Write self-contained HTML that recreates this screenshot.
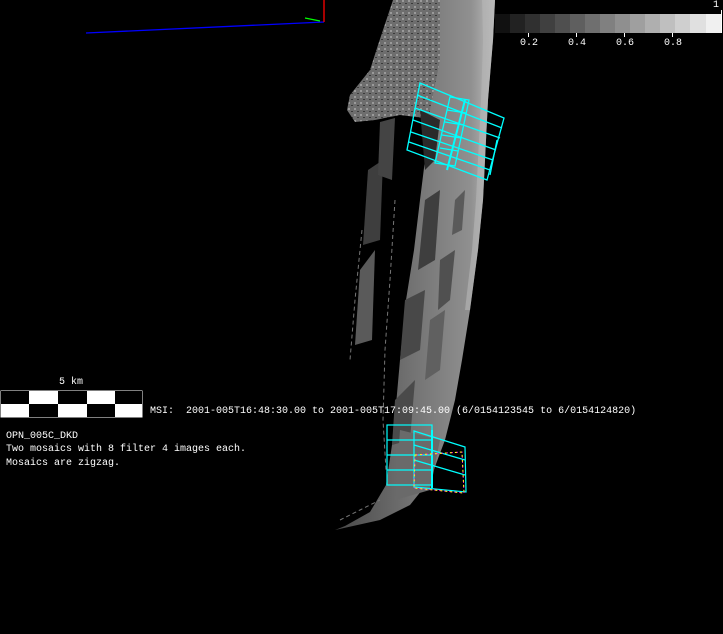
<!DOCTYPE html>
<html><head><style>
html,body{margin:0;padding:0;background:#000;width:723px;height:634px;overflow:hidden}
.t{position:absolute;color:#fff;font-family:"Liberation Mono",monospace;font-size:10px;white-space:pre;line-height:12px}
</style></head><body>
<svg width="723" height="634" style="position:absolute;left:0;top:0">
<defs>
<linearGradient id="g" x1="0" y1="0" x2="1" y2="0">
<stop offset="0" stop-color="#484848"/><stop offset="0.5" stop-color="#747474"/><stop offset="0.85" stop-color="#909090"/><stop offset="1" stop-color="#bdbdbd"/>
</linearGradient>
<pattern id="dots" width="6" height="6" patternUnits="userSpaceOnUse">
<rect width="6" height="6" fill="#6e6e6e"/>
<rect x="0" y="0" width="2" height="2" fill="#9a9a9a"/>
<rect x="3" y="3" width="2" height="1" fill="#3a3a3a"/>
</pattern>
</defs>
<line x1="86" y1="33" x2="324" y2="22" stroke="#0000ff" stroke-width="1.3"/>
<line x1="324" y1="0" x2="324" y2="22" stroke="#ff0000" stroke-width="1.3"/>
<line x1="305" y1="18" x2="320" y2="21" stroke="#00ff00" stroke-width="1.3"/>
<polygon points="393,0 480,0 478,60 460,100 440,120 400,115 375,120 355,122 347,110 350,95 370,70 378,45" fill="url(#dots)"/>
<polygon points="440,0 495,0 493,40 488,100 485,160 483,200 478,250 470,310 462,360 455,400 445,440 430,480 410,505 380,520 335,530 345,526 370,512 386,485 392,445 396,405 400,360 406,300 414,250 420,200 425,160 430,110 440,60" fill="url(#g)"/>
<polygon points="482,0 495,0 493,40 488,100 485,160 483,200 478,250 470,310 465,310 472,250 476,200 478,160 481,100 483,40" fill="#b8b8b8" opacity="0.6"/>
<polygon points="420,110 440,120 435,160 425,170" fill="#2a2a2a"/>
<polygon points="425,200 440,190 435,260 418,270" fill="#3e3e3e"/>
<polygon points="440,260 455,250 450,300 438,310" fill="#505050"/>
<polygon points="405,300 425,290 420,350 400,360" fill="#484848"/>
<polygon points="395,400 415,380 410,440 392,445" fill="#4a4a4a"/>
<polygon points="455,200 465,190 462,230 452,235" fill="#5a5a5a"/>
<polygon points="430,320 445,310 440,370 425,380" fill="#606060"/>
<polygon points="360,270 375,250 372,340 355,345" fill="#5a5a5a"/>
<polygon points="368,170 383,160 380,240 363,245" fill="#3e3e3e"/>
<polygon points="380,122 395,118 392,180 378,175" fill="#444"/>
<polygon points="400,430 440,440 430,490 395,500" fill="#6a6a6a"/>
<g stroke="#777" stroke-width="1" stroke-dasharray="4,3" fill="none">
<path d="M362,230 L355,300 L350,360"/>
<path d="M395,200 L390,280 L385,350 L383,420 L386,470"/>
<path d="M340,520 L360,510 L380,500"/>
</g>
<g stroke="#00ffff" stroke-width="1.3" fill="none">
<polygon points="420,83 504,118 487,180 407,150"/>
<line x1="417" y1="95" x2="502" y2="128"/>
<line x1="415" y1="108" x2="500" y2="138"/>
<line x1="413" y1="120" x2="496" y2="150"/>
<line x1="411" y1="132" x2="493" y2="160"/>
<line x1="409" y1="142" x2="490" y2="170"/>
<polygon points="450,97 469,100 455,166 435,163"/>
<line x1="447" y1="110" x2="466" y2="113"/>
<line x1="445" y1="122" x2="464" y2="125"/>
<line x1="442" y1="135" x2="461" y2="138"/>
<line x1="440" y1="148" x2="458" y2="151"/>
<line x1="465" y1="100" x2="447" y2="170" stroke-width="2"/>
<line x1="497" y1="140" x2="490" y2="175"/>
</g>
<g stroke="#00ffff" stroke-width="1.2" fill="none">
<rect x="387" y="425" width="45" height="60"/>
<line x1="387" y1="440" x2="432" y2="440"/>
<line x1="387" y1="455" x2="432" y2="455"/>
<line x1="387" y1="470" x2="432" y2="470"/>
<polygon points="414,431 465,447 466,492 414,487"/>
<line x1="414" y1="445" x2="465" y2="460"/>
<line x1="414" y1="460" x2="465" y2="475"/>
<line x1="432" y1="430" x2="432" y2="488" stroke-width="2"/>
</g>
<polygon points="415,455 462,452 464,493 414,488" fill="none" stroke="#ff00ff" stroke-width="1" stroke-dasharray="3,2"/>
<polygon points="415,455 462,452 464,493 414,488" fill="none" stroke="#ffff00" stroke-width="1" stroke-dasharray="2,3"/>
<g>
<rect x="495" y="14" width="15" height="19" fill="#111"/>
<rect x="510" y="14" width="15" height="19" fill="#222"/>
<rect x="525" y="14" width="15" height="19" fill="#303030"/>
<rect x="540" y="14" width="15" height="19" fill="#404040"/>
<rect x="555" y="14" width="15" height="19" fill="#4f4f4f"/>
<rect x="570" y="14" width="15" height="19" fill="#5f5f5f"/>
<rect x="585" y="14" width="15" height="19" fill="#6f6f6f"/>
<rect x="600" y="14" width="15" height="19" fill="#808080"/>
<rect x="615" y="14" width="15" height="19" fill="#8f8f8f"/>
<rect x="630" y="14" width="15" height="19" fill="#9f9f9f"/>
<rect x="645" y="14" width="15" height="19" fill="#afafaf"/>
<rect x="660" y="14" width="15" height="19" fill="#bfbfbf"/>
<rect x="675" y="14" width="15" height="19" fill="#cfcfcf"/>
<rect x="690" y="14" width="16" height="19" fill="#e0e0e0"/>
<rect x="706" y="14" width="16" height="19" fill="#f0f0f0"/>
<g stroke="#fff"><line x1="528.5" y1="33" x2="528.5" y2="37"/><line x1="576.5" y1="33" x2="576.5" y2="37"/><line x1="624.5" y1="33" x2="624.5" y2="37"/><line x1="672.5" y1="33" x2="672.5" y2="37"/><line x1="721.5" y1="10" x2="721.5" y2="33"/></g>
</g>
<rect x="0.5" y="390.5" width="142" height="27" fill="#fff"/>
<rect x="1" y="391" width="28" height="13" fill="#000"/>
<rect x="58" y="391" width="29" height="13" fill="#000"/>
<rect x="115" y="391" width="27" height="13" fill="#000"/>
<rect x="29" y="404" width="29" height="13" fill="#000"/>
<rect x="87" y="404" width="28" height="13" fill="#000"/>
</svg>
<div class="t" style="left:713px;top:0px">1</div>
<div class="t" style="left:520px;top:38px">0.2</div>
<div class="t" style="left:568px;top:38px">0.4</div>
<div class="t" style="left:616px;top:38px">0.6</div>
<div class="t" style="left:664px;top:38px">0.8</div>
<div class="t" style="left:59px;top:377px">5 km</div>
<div class="t" style="left:150px;top:406px">MSI:  2001-005T16:48:30.00 to 2001-005T17:09:45.00 (6/0154123545 to 6/0154124820)</div>
<div class="t" style="left:6px;top:431px">OPN_005C_DKD</div>
<div class="t" style="left:6px;top:444px">Two mosaics with 8 filter 4 images each.</div>
<div class="t" style="left:6px;top:458px">Mosaics are zigzag.</div>
</body></html>
